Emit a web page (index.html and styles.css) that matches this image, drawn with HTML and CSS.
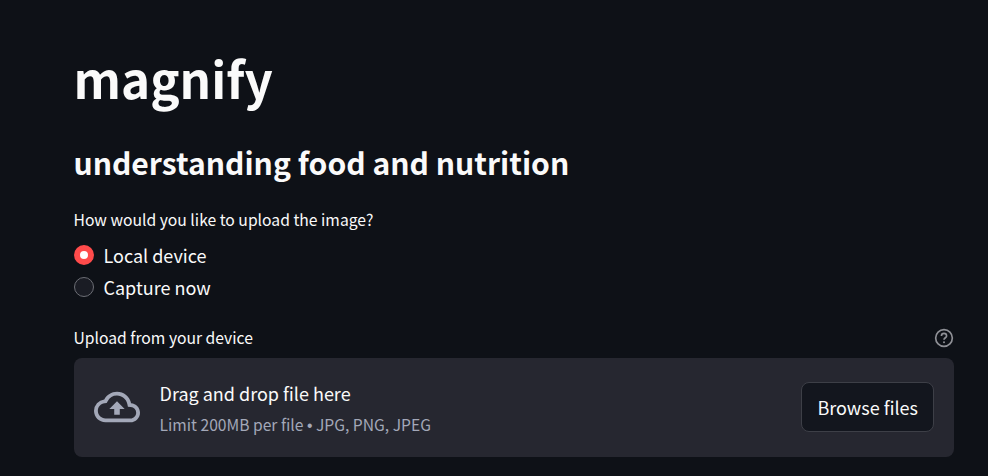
FILE: index.html
```html
<!DOCTYPE html>
<html lang="en">

<head>
    <meta charset="UTF-8">
    <title>magnify</title>
    <link rel="stylesheet" href="styles.css">
</head>

<body>
    <main class="block-container">
        <h1 class="app-title">magnify</h1>
        <h2 class="app-subtitle">understanding food and nutrition</h2>

        <div class="radio-group">
            <p class="widget-label">How would you like to upload the image?</p>
            <label class="radio-option">
                <span class="radio-dot radio-dot-on"></span>
                <span>Local device</span>
            </label>
            <label class="radio-option">
                <span class="radio-dot"></span>
                <span>Capture now</span>
            </label>
        </div>

        <div class="uploader">
            <div class="uploader-head">
                <p class="widget-label">Upload from your device</p>
                <svg class="help-icon" viewBox="0 0 24 24" width="20" height="20" fill="none">
                    <circle cx="12" cy="12" r="10" stroke="currentColor" stroke-width="2"/>
                    <path d="M8.9 9.6a3.1 3.1 0 0 1 6.2 0c0 2-3.1 2.3-3.1 4.6" stroke="currentColor" stroke-width="2"/>
                    <circle cx="12" cy="17" r="1.2" fill="currentColor"/>
                </svg>
            </div>
            <section class="dropzone">
                <div class="dropzone-info">
                    <svg class="cloud-icon" viewBox="0 0 24 24" width="46" height="46" fill="currentColor">
                        <path d="M19.35 10.04A7.49 7.49 0 0 0 12 4C9.11 4 6.6 5.64 5.35 8.04A5.994 5.994 0 0 0 0 14c0 3.31 2.69 6 6 6h13c2.76 0 5-2.24 5-5 0-2.64-2.05-4.78-4.65-4.96zM19 18H6c-2.21 0-4-1.79-4-4 0-2.05 1.53-3.76 3.56-3.97l1.07-.11.5-.95A5.469 5.469 0 0 1 12 6c2.62 0 4.88 1.86 5.39 4.43l.3 1.5 1.53.11A2.98 2.98 0 0 1 22 15c0 1.65-1.35 3-3 3z"/>
                        <path d="M8 13h2.55v3h2.9v-3H16l-4-4z"/>
                    </svg>
                    <div class="dropzone-text">
                        <span class="dropzone-title">Drag and drop file here</span>
                        <small class="dropzone-limit">Limit 200MB per file <span class="bullet">•</span> JPG, PNG, JPEG</small>
                    </div>
                </div>
                <button class="browse-btn" type="button">Browse files</button>
            </section>
        </div>
    </main>
</body>

</html>
```

FILE: styles.css
```css
html,
body {
    height: 100%;
}

body {
    margin: 0;
    overflow: hidden;
    background-color: #0e1117;
    color: #fafafa;
    font-family: "Noto Sans CJK SC", "Noto Sans", sans-serif;
}

.block-container {
    padding: 38px 34px 0 74px;
}

.app-title {
    margin: 0 0 0 -0.5px;
    font-size: 49.3px;
    font-weight: 700;
    line-height: 80px;
}

.app-subtitle {
    margin: 24px 0 0 -0.5px;
    font-size: 30.12px;
    font-weight: 700;
    line-height: 40px;
}

.widget-label {
    margin: 0 0 0 -0.5px;
    font-size: 15.7px;
    line-height: 26px;
}

.radio-group {
    margin-top: 25px;
}

.radio-group .widget-label {
    margin-bottom: 6px;
}

.radio-option {
    display: flex;
    align-items: center;
    gap: 9.5px;
    height: 32px;
    font-size: 18px;
}

.radio-dot {
    box-sizing: border-box;
    width: 20px;
    height: 20px;
    border: 1px solid #6c6e75;
    border-radius: 50%;
    background-color: #1a1c24;
}

.radio-dot-on {
    border: 6px solid #ff4b4b;
    background-color: #fff;
}

.uploader {
    margin-top: 22px;
}

.uploader-head {
    display: flex;
    justify-content: space-between;
    align-items: center;
    margin-bottom: 7px;
}

.help-icon {
    color: #8f9096;
}

.dropzone {
    display: flex;
    justify-content: space-between;
    align-items: center;
    height: 99px;
    padding: 0 20px;
    border-radius: 8px;
    background-color: #262730;
}

.dropzone-info {
    display: flex;
    align-items: center;
    gap: 20px;
}

.cloud-icon {
    margin-bottom: 1px;
    color: #a3a8b8;
}

.dropzone-text {
    display: flex;
    flex-direction: column;
    margin: 2px 0 0 -0.5px;
}

.dropzone-title {
    font-size: 18px;
    line-height: 28px;
}

.dropzone-limit {
    margin-top: 6px;
    font-size: 15.65px;
    line-height: 24px;
    color: #a3a8b8;
}

.bullet {
    font-family: "Liberation Sans", sans-serif;
}

.browse-btn {
    height: 50px;
    margin-bottom: 2px;
    padding: 0 15px;
    border: 1px solid #3d3f47;
    border-radius: 8px;
    background-color: #13161e;
    color: #fafafa;
    font-family: inherit;
    font-size: 18px;
}
```
